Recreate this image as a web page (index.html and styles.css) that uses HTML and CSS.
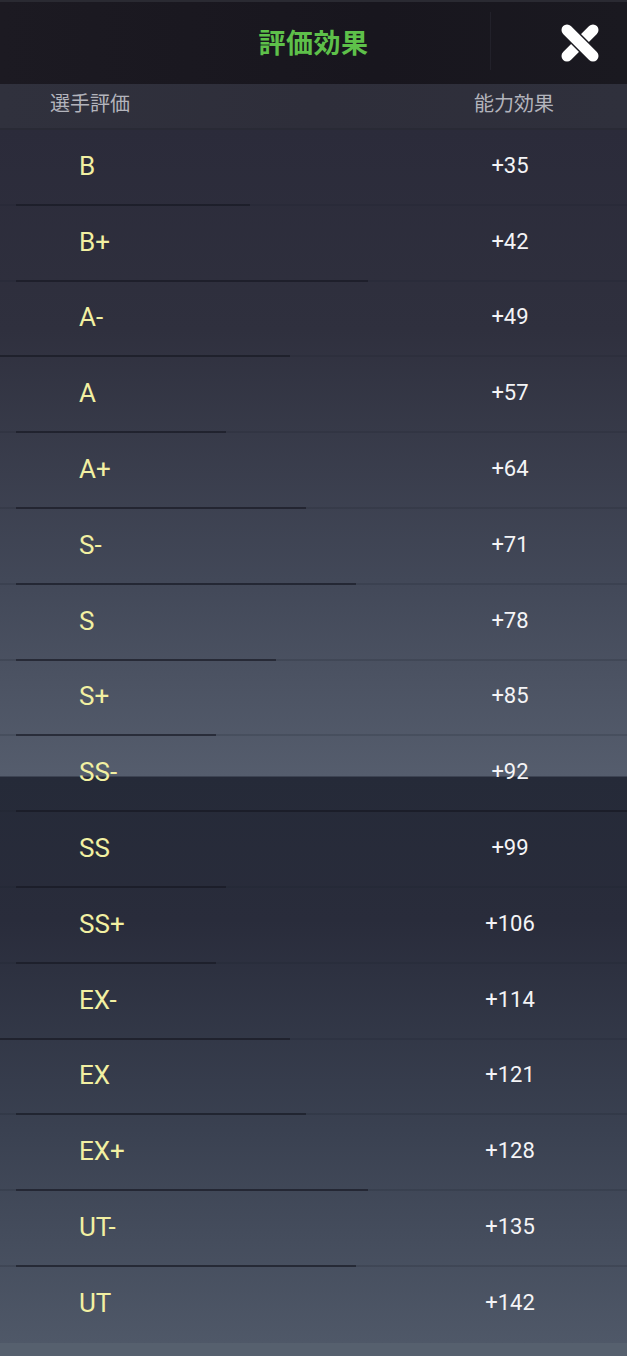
FILE: index.html
```html
<!DOCTYPE html>
<html lang="ja">
<head>
<meta charset="utf-8">
<title>評価効果</title>
<link rel="stylesheet" href="styles.css">
</head>
<body>
<div class="screen">
  <header class="topbar">
    <h1 class="title">評価効果</h1>
    <button class="close" aria-label="閉じる">
      <svg width="48" height="48" viewBox="0 0 48 48">
        <line x1="11" y1="37" x2="37" y2="11" stroke="#ffffff" stroke-width="11" stroke-linecap="round"/>
        <line x1="11" y1="11" x2="37" y2="37" stroke="#1a1920" stroke-width="14" stroke-linecap="round"/>
        <line x1="11" y1="11" x2="37" y2="37" stroke="#ffffff" stroke-width="11" stroke-linecap="round"/>
      </svg>
    </button>
  </header>
  <div class="colhead">
    <span class="ch-grade">選手評価</span>
    <span class="ch-value">能力効果</span>
  </div>
  <ul class="list">
    <li class="row l1"><span class="grade">B</span><span class="value">+35</span></li>
    <li class="row l2"><span class="grade">B+</span><span class="value">+42</span></li>
    <li class="row l3"><span class="grade">A-</span><span class="value">+49</span></li>
    <li class="row l4"><span class="grade">A</span><span class="value">+57</span></li>
    <li class="row l5"><span class="grade">A+</span><span class="value">+64</span></li>
    <li class="row l6"><span class="grade">S-</span><span class="value">+71</span></li>
    <li class="row l7"><span class="grade">S</span><span class="value">+78</span></li>
    <li class="row l8"><span class="grade">S+</span><span class="value">+85</span></li>
    <li class="row l9"><span class="grade">SS-</span><span class="value">+92</span></li>
    <li class="row l4"><span class="grade">SS</span><span class="value">+99</span></li>
    <li class="row l8"><span class="grade">SS+</span><span class="value">+106</span></li>
    <li class="row l3"><span class="grade">EX-</span><span class="value">+114</span></li>
    <li class="row l5"><span class="grade">EX</span><span class="value">+121</span></li>
    <li class="row l2"><span class="grade">EX+</span><span class="value">+128</span></li>
    <li class="row l6"><span class="grade">UT-</span><span class="value">+135</span></li>
    <li class="row l0"><span class="grade">UT</span><span class="value">+142</span></li>
  </ul>
</div>
</body>
</html>
```
FILE: styles.css
```css
html, body {
  margin: 0;
  padding: 0;
  background: #4e5666;
}
body {
  font-family: Roboto, "Noto Sans CJK JP", sans-serif;
}
.screen {
  width: 627px;
  height: 1356px;
  overflow: hidden;
  display: flex;
  flex-direction: column;
  background: #56606e;
}
.topbar {
  height: 84px;
  flex: none;
  display: flex;
  align-items: center;
  justify-content: center;
  position: relative;
  background: linear-gradient(90deg, #1c1a22 0%, #18161e 60%, #1a1920 100%);
  border-top: 2px solid #2a2a32;
  box-sizing: border-box;
  padding-bottom: 4px;
}
.topbar::after {
  content: "";
  position: absolute;
  left: 490px;
  top: 10px;
  bottom: 14px;
  width: 1px;
  background: #22212a;
}
.title {
  margin: 0;
  font-family: "Noto Sans CJK JP", sans-serif;
  font-size: 27px;
  font-weight: 700;
  color: #5ec04a;
  letter-spacing: 0.5px;
  line-height: 1;
}
.close {
  position: absolute;
  right: 23px;
  top: 17px;
  width: 48px;
  height: 48px;
  padding: 0;
  border: 0;
  background: none;
  display: flex;
}
.colhead {
  height: 46px;
  flex: none;
  display: flex;
  align-items: center;
  justify-content: space-between;
  padding: 0 73px 6px 50px;
  background: linear-gradient(90deg, #30313d 0%, #2e2e3a 50%, #2f303c 100%);
  border-bottom: 2px solid #292a35;
  box-sizing: border-box;
  font-family: "Noto Sans CJK JP", sans-serif;
  font-size: 20px;
  line-height: 1;
  color: #b3b4bc;
}
.list {
  list-style: none;
  margin: 0;
  padding: 0;
  flex: none;
  background:
    linear-gradient(180deg, #2b2b3a 0px, #2f303e 200px, #424858 450px, #555d6d 646px, #252a38 647px, #292c3b 790px, #3a4151 1000px, #4f5868 1213px);
}
.row {
  height: 75.8px;
  display: flex;
  align-items: center;
  position: relative;
  box-sizing: border-box;
}
.row::after {
  content: "";
  position: absolute;
  left: 0;
  right: 0;
  bottom: 0;
  height: 2px;
  background: rgba(30, 32, 44, 0.18);
}
.row::before {
  content: "";
  position: absolute;
  left: 16px;
  bottom: 0;
  height: 2px;
  background: rgba(22, 22, 32, 0.6);
  width: 0;
}
.l1::before { width: 234px; }
.l2::before { width: 352px; }
.l3::before { width: 290px; left: 0; }
.l4::before { width: 210px; }
.l5::before { width: 290px; }
.l6::before { width: 340px; }
.l7::before { width: 260px; }
.l8::before { width: 200px; }
.l9::before { width: 611px; }
.l0::after, .l0::before { display: none; }
.grade {
  padding-left: 79px;
  margin-top: -4px;
  flex: none;
  font-size: 26px;
  line-height: 1;
  color: #f2f0a2;
  white-space: nowrap;
}
.value {
  position: absolute;
  left: 465px;
  width: 90px;
  top: 50%;
  transform: translateY(-60%);
  text-align: center;
  font-size: 22px;
  line-height: 1;
  color: #f4f4f6;
}
```
